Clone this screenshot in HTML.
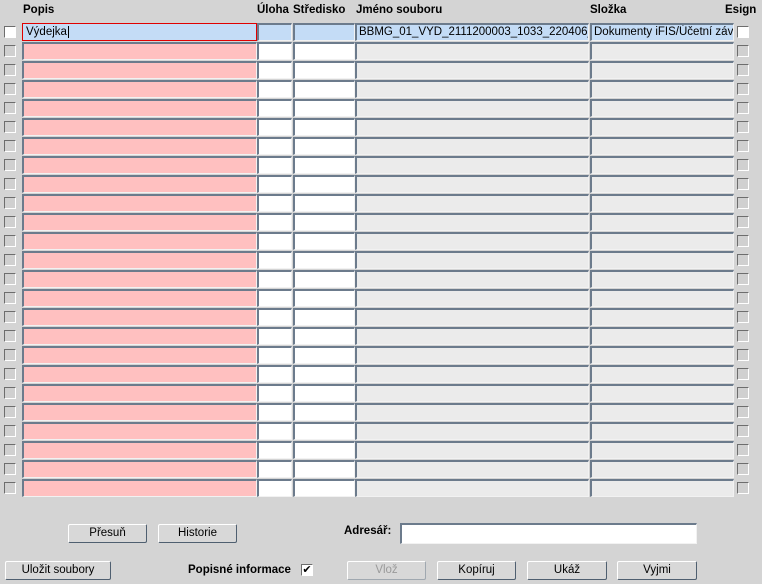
<!DOCTYPE html>
<html><head><meta charset="utf-8"><style>
body{margin:0;width:762px;height:584px;background:#d4d4d4;font-family:"Liberation Sans",Arial,sans-serif;font-size:11.5px;position:relative;overflow:hidden}
.a{position:absolute;box-sizing:border-box}
.h{font-weight:bold;font-size:11.5px;top:4px}
.in{border-style:solid;border-width:2px 1px 1px 2px;border-color:#6c7b8c #f2f2f2 #f2f2f2 #6c7b8c;height:18px;padding:1px 0 0 2px;white-space:nowrap;overflow:hidden}
.cb{width:12px;height:12px;border:1px solid;border-color:#6d6d6d #fff #fff #6d6d6d;background:#d0d0d0}
.btn{border:1px solid;border-color:#fff #4f5f70 #4f5f70 #fff;background:#d8d8d8;height:19px;text-align:center;line-height:17px;font-size:11.5px;border-radius:2px}
</style></head><body>
<div class="a h" style="left:23px">Popis</div>
<div class="a h" style="left:257px">Úloha</div>
<div class="a h" style="left:293px">Středisko</div>
<div class="a h" style="left:356px">Jméno souboru</div>
<div class="a h" style="left:590px">Složka</div>
<div class="a h" style="left:725px">Esign</div>
<div id="rows"></div>
<script>
var h='';
for(var i=0;i<25;i++){
 var y=23+i*19,f=i==0;
 var pb=f?'#c4dcf6':'#ffc0c0', wb=f?'#c4dcf6':'#fff', gb=f?'#c4dcf6':'#ebebeb';
 h+='<div class="a cb" style="left:4px;top:'+(y+3)+'px;background:'+(f?'#fff':'#d0d0d0')+'"></div>';
 h+='<div class="a in" style="left:22px;top:'+y+'px;width:235px;background:'+pb+(f?';border:1px solid #e00000;padding:2px 0 0 3px':'')+'">'+(f?'Výdejka<span style="border-left:1px solid #000;margin-left:1px"></span>':'')+'</div>';
 h+='<div class="a in" style="left:257px;top:'+y+'px;width:35px;background:'+wb+'"></div>';
 h+='<div class="a in" style="left:293px;top:'+y+'px;width:62px;background:'+wb+'"></div>';
 h+='<div class="a in" style="left:355px;top:'+y+'px;width:234px;background:'+gb+'">'+(f?'BBMG_01_VYD_2111200003_1033_220406_16':'')+'</div>';
 h+='<div class="a in" style="left:590px;top:'+y+'px;width:144px;background:'+gb+'">'+(f?'Dokumenty iFIS/Účetní závěrka':'')+'</div>';
 h+='<div class="a cb" style="left:737px;top:'+(y+3)+'px;background:'+(f?'#fff':'#d0d0d0')+'"></div>';
}
document.getElementById('rows').innerHTML=h;
</script>
<div class="a btn" style="left:68px;top:524px;width:79px">Přesuň</div>
<div class="a btn" style="left:158px;top:524px;width:79px">Historie</div>
<div class="a" style="left:344px;top:525px;font-weight:bold;font-size:11.5px">Adresář:</div>
<div class="a in" style="left:400px;top:523px;width:297px;height:21px;background:#fff"></div>
<div class="a btn" style="left:5px;top:561px;width:106px">Uložit soubory</div>
<div class="a" style="left:188px;top:564px;font-weight:bold;font-size:11.5px">Popisné informace</div>
<div class="a cb" style="left:301px;top:564px;background:#fff;font-size:11px;line-height:10px;text-align:center">✔</div>
<div class="a btn" style="left:347px;top:561px;width:79px;color:#9a9a9a;border-color:#fff #a0a8b0 #a0a8b0 #fff">Vlož</div>
<div class="a btn" style="left:437px;top:561px;width:79px">Kopíruj</div>
<div class="a btn" style="left:527px;top:561px;width:80px">Ukáž</div>
<div class="a btn" style="left:617px;top:561px;width:80px">Vyjmi</div>
</body></html>
